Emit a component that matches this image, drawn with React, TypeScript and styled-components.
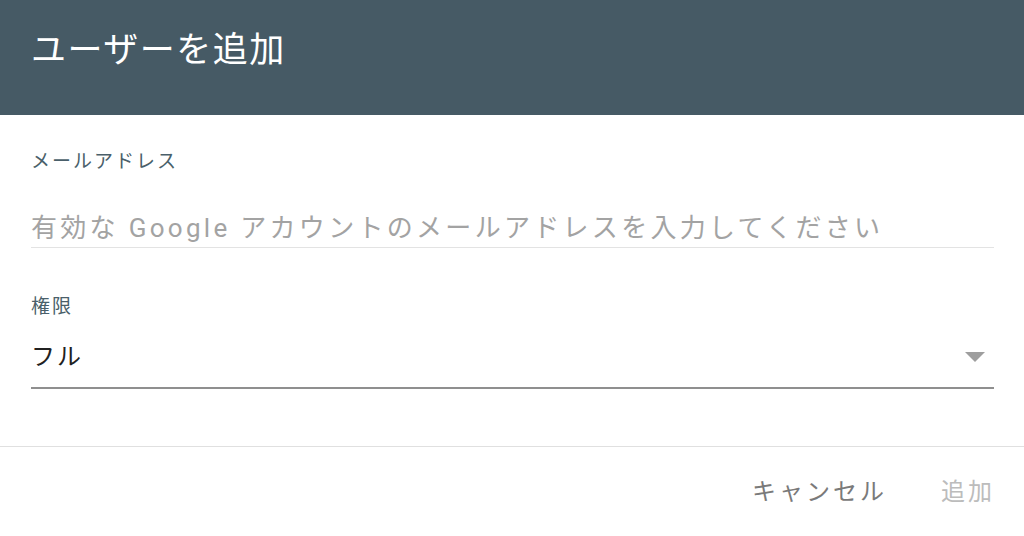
import React from "react";
import styled, { createGlobalStyle } from "styled-components";

const Global = createGlobalStyle`
  html, body { margin: 0; padding: 0; background: #ffffff; }
  body { font-family: Roboto, "Noto Sans CJK JP", sans-serif; }
`;

const Dialog = styled.div`
  width: 1024px;
  height: 536px;
  display: flex;
  flex-direction: column;
  background: #fff;
`;

const Header = styled.header`
  height: 115px;
  box-sizing: border-box;
  background: #465a65;
  display: flex;
  align-items: flex-start;
  padding: 29px 31px 0;
`;

const Title = styled.h1`
  margin: 0;
  font-size: 35px;
  font-weight: 400;
  letter-spacing: 1.5px;
  line-height: 44px;
  color: #ffffff;
`;

const Body = styled.div`
  padding: 0 30px 0 31px;
  display: flex;
  flex-direction: column;
`;

const Label = styled.div<{ $top: number }>`
  margin-top: ${(p) => p.$top}px;
  font-size: 19px;
  letter-spacing: 2px;
  line-height: 24px;
  color: #4a5f6a;
`;

const Field = styled.div<{ $strong?: boolean }>`
  box-sizing: border-box;
  display: flex;
  align-items: ${(p) => (p.$strong ? "center" : "flex-end")};
  justify-content: space-between;
  height: ${(p) => (p.$strong ? 52 : 56)}px;
  margin-top: 18px;
  padding-bottom: ${(p) => (p.$strong ? 10 : 4)}px;
  border-bottom: ${(p) => (p.$strong ? "2px solid #8f8f8f" : "1px solid #e3e3e3")};
`;

const Placeholder = styled.span`
  font-size: 26px;
  line-height: 30px;
  letter-spacing: 3.3px;
  color: #a3a3a3;
`;

const Value = styled.span`
  font-size: 24px;
  line-height: 30px;
  letter-spacing: 2px;
  color: #212121;
`;

const Arrow = styled.svg`
  margin-right: 9px;
`;

const Divider = styled.div`
  margin-top: 57px;
  height: 1px;
  background: #e0e0e0;
`;

const Footer = styled.div`
  display: flex;
  justify-content: flex-end;
  align-items: center;
  gap: 54px;
  padding: 30px 29px 0 0;
`;

const Button = styled.button<{ $disabled?: boolean }>`
  border: none;
  background: none;
  padding: 0;
  font-family: inherit;
  font-size: 24px;
  line-height: 30px;
  letter-spacing: 3px;
  color: ${(p) => (p.$disabled ? "#bcbcbc" : "#7a7a7a")};
`;

export default function App() {
  return (
    <>
      <Global />
      <Dialog>
        <Header>
          <Title>ユーザーを追加</Title>
        </Header>
        <Body>
          <Label $top={35}>メールアドレス</Label>
          <Field>
            <Placeholder>有効な Google アカウントのメールアドレスを入力してください</Placeholder>
          </Field>
          <Label $top={47}>権限</Label>
          <Field $strong>
            <Value>フル</Value>
            <Arrow width="20" height="10" viewBox="0 0 20 10">
              <path d="M0 0 L20 0 L10 10 Z" fill="#9e9e9e" />
            </Arrow>
          </Field>
        </Body>
        <Divider />
        <Footer>
          <Button>キャンセル</Button>
          <Button $disabled>追加</Button>
        </Footer>
      </Dialog>
    </>
  );
}
